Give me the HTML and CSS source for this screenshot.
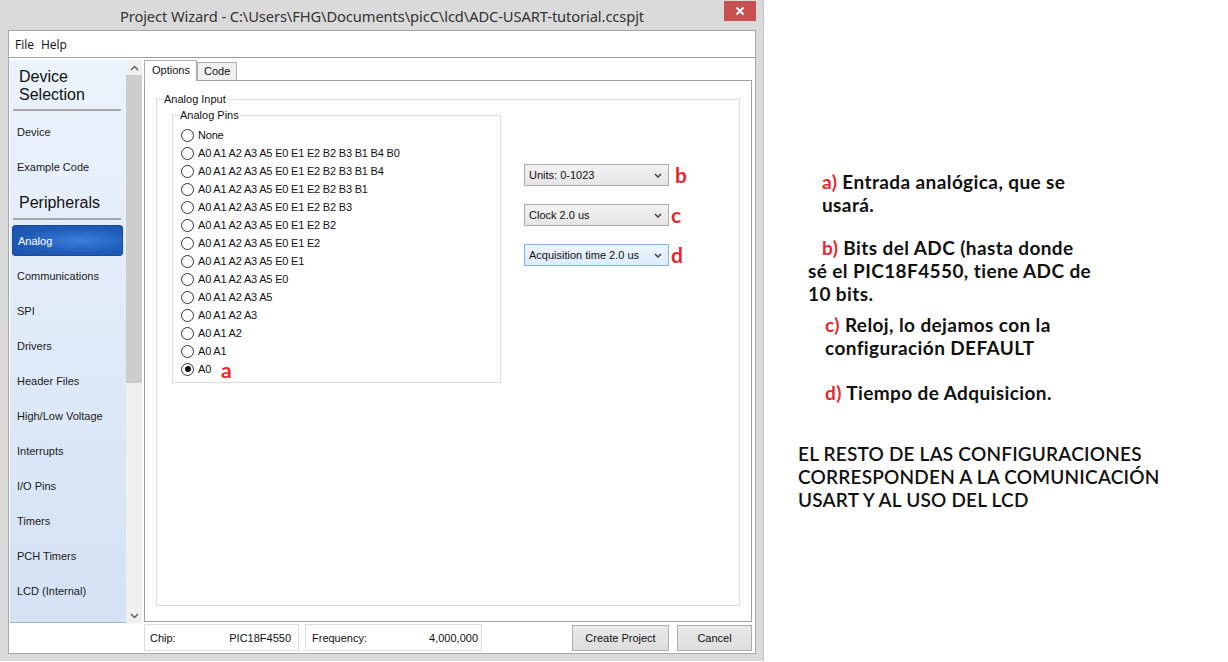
FILE: index.html
```html
<!DOCTYPE html>
<html>
<head>
<meta charset="utf-8">
<title>Project Wizard</title>
<link rel="stylesheet" href="styles.css">
</head>
<body>
<div class="page">
  <div class="window">
    <div class="titlebar">
      <span class="title">Project Wizard - C:\Users\FHG\Documents\picC\lcd\ADC-USART-tutorial.ccspjt</span>
      <div class="close"><svg width="10" height="10" viewBox="0 0 10 10"><path d="M1.5 1.5 L8.5 8.5 M8.5 1.5 L1.5 8.5" stroke="#fff" stroke-width="1.8" fill="none"/></svg></div>
    </div>
    <div class="client">
      <div class="menubar"><span>File</span><span>Help</span></div>
      <div class="main">
        <div class="sidebar">
          <div class="nav">
            <div class="nav-head first">Device<br>Selection</div>
            <div class="sep"></div>
            <div class="nav-item">Device</div>
            <div class="nav-item">Example Code</div>
            <div class="nav-head">Peripherals</div>
            <div class="sep"></div>
            <div class="nav-item active">Analog</div>
            <div class="nav-item">Communications</div>
            <div class="nav-item">SPI</div>
            <div class="nav-item">Drivers</div>
            <div class="nav-item">Header Files</div>
            <div class="nav-item">High/Low Voltage</div>
            <div class="nav-item">Interrupts</div>
            <div class="nav-item">I/O Pins</div>
            <div class="nav-item">Timers</div>
            <div class="nav-item">PCH Timers</div>
            <div class="nav-item">LCD (Internal)</div>
            <div class="nav-item">LCD (External)</div>
          </div>
          <div class="scrollbar">
            <div class="sb-btn"><svg width="9" height="6" viewBox="0 0 9 6"><path d="M1 5 L4.5 1.5 L8 5" stroke="#606060" stroke-width="1.5" fill="none"/></svg></div>
            <div class="sb-track"><div class="sb-thumb"></div></div>
            <div class="sb-btn"><svg width="9" height="6" viewBox="0 0 9 6"><path d="M1 1 L4.5 4.5 L8 1" stroke="#606060" stroke-width="1.5" fill="none"/></svg></div>
          </div>
        </div>
        <div class="rightcol">
          <div class="tabs">
            <div class="tab active">Options</div>
            <div class="tab">Code</div>
          </div>
          <div class="tabpanel">
            <fieldset class="group outer">
              <legend>Analog Input</legend>
              <div class="outer-row">
                <fieldset class="group pins">
                  <legend>Analog Pins</legend>
                  <div class="radios">
                    <div class="radio"><span class="circle"></span>None</div>
                    <div class="radio"><span class="circle"></span>A0 A1 A2 A3 A5 E0 E1 E2 B2 B3 B1 B4 B0</div>
                    <div class="radio"><span class="circle"></span>A0 A1 A2 A3 A5 E0 E1 E2 B2 B3 B1 B4</div>
                    <div class="radio"><span class="circle"></span>A0 A1 A2 A3 A5 E0 E1 E2 B2 B3 B1</div>
                    <div class="radio"><span class="circle"></span>A0 A1 A2 A3 A5 E0 E1 E2 B2 B3</div>
                    <div class="radio"><span class="circle"></span>A0 A1 A2 A3 A5 E0 E1 E2 B2</div>
                    <div class="radio"><span class="circle"></span>A0 A1 A2 A3 A5 E0 E1 E2</div>
                    <div class="radio"><span class="circle"></span>A0 A1 A2 A3 A5 E0 E1</div>
                    <div class="radio"><span class="circle"></span>A0 A1 A2 A3 A5 E0</div>
                    <div class="radio"><span class="circle"></span>A0 A1 A2 A3 A5</div>
                    <div class="radio"><span class="circle"></span>A0 A1 A2 A3</div>
                    <div class="radio"><span class="circle"></span>A0 A1 A2</div>
                    <div class="radio"><span class="circle"></span>A0 A1</div>
                    <div class="radio"><span class="circle checked"></span>A0<span class="mark mark-a">a</span></div>
                  </div>
                </fieldset>
                <div class="selects">
                  <div class="sel-row"><div class="select"><span>Units: 0-1023</span><svg width="8" height="5" viewBox="0 0 8 5"><path d="M1 1 L4 4 L7 1" stroke="#404040" stroke-width="1.5" fill="none"/></svg></div><span class="mark mark-b">b</span></div>
                  <div class="sel-row"><div class="select"><span>Clock 2.0 us</span><svg width="8" height="5" viewBox="0 0 8 5"><path d="M1 1 L4 4 L7 1" stroke="#404040" stroke-width="1.5" fill="none"/></svg></div><span class="mark mark-c">c</span></div>
                  <div class="sel-row"><div class="select focus"><span>Acquisition time 2.0 us</span><svg width="8" height="5" viewBox="0 0 8 5"><path d="M1 1 L4 4 L7 1" stroke="#404040" stroke-width="1.5" fill="none"/></svg></div><span class="mark mark-d">d</span></div>
                </div>
              </div>
            </fieldset>
          </div>
          <div class="statusbar">
            <div class="field chip"><span>Chip:</span><span>PIC18F4550</span></div>
            <div class="field freq"><span>Frequency:</span><span>4,000,000</span></div>
            <div class="spacer"></div>
            <div class="btn create">Create Project</div>
            <div class="btn cancel">Cancel</div>
          </div>
        </div>
      </div>
    </div>
  </div>
  <div class="notes">
    <div class="note note-a">
      <div class="line"><span class="red">a)</span> Entrada analógica, que se</div>
      <div class="line">usará.</div>
    </div>
    <div class="note note-b">
      <div class="line"><span class="red">b)</span> Bits del ADC (hasta donde</div>
      <div class="line out">sé el PIC18F4550, tiene ADC de</div>
      <div class="line out">10 bits.</div>
    </div>
    <div class="note note-c">
      <div class="line"><span class="red">c)</span> Reloj, lo dejamos con la</div>
      <div class="line">configuración DEFAULT</div>
    </div>
    <div class="note note-d">
      <div class="line"><span class="red">d)</span> Tiempo de Adquisicion.</div>
    </div>
    <div class="note caps">
      <div class="line">EL RESTO DE LAS CONFIGURACIONES</div>
      <div class="line">CORRESPONDEN A LA COMUNICACIÓN</div>
      <div class="line">USART Y AL USO DEL LCD</div>
    </div>
  </div>
</div>
</body>
</html>
```

FILE: styles.css
```css
* { box-sizing: border-box; }
html, body { margin: 0; padding: 0; background: #fff; }
body { width: 1228px; height: 662px; overflow: hidden; font-family: "Liberation Sans", Arial, sans-serif; }

.page { display: flex; align-items: flex-start; }

/* window frame */
.window {
  width: 764px; height: 661px; flex: none;
  background: #dadada;
  padding: 0 7px 0 8px;
  border-right: 1px solid #c4c4c4;
}
.titlebar {
  height: 30px; position: relative;
  display: flex; align-items: center; justify-content: center;
}
.title {
  font-family: "Noto Sans", "Open Sans", sans-serif;
  font-size: 14.7px; color: #333; letter-spacing: -0.1px;
  margin-top: 1px;
}
.close {
  position: absolute; top: 1px; right: 0;
  width: 32px; height: 20px; background: #c75050;
  display: flex; align-items: center; justify-content: center;
}

.client {
  height: 624px; background: #fff;
  border: 1px solid #a8a8a8;
  display: flex; flex-direction: column;
}
.menubar {
  height: 27px; border-bottom: 1px solid #a0a0a0;
  display: flex; align-items: center; gap: 7px;
  padding-left: 6px;
  font-family: "Open Sans", "Noto Sans", sans-serif; font-size: 12px; color: #111;
}
.main { flex: 1; display: flex; padding: 2px 3px 0 1px; gap: 2px; }

/* sidebar */
.sidebar { display: flex; height: 563px; flex: none; }
.nav {
  width: 116px; height: 563px; overflow: hidden;
  display: flex; flex-direction: column;
  background: linear-gradient(#ebf3fc, #d4e2f4);
  border-bottom: 1px solid #9fb3cf;
  font-size: 11px; color: #1a1a1a;
}
.nav > * { flex-shrink: 0; }
.nav-head {
  font-size: 16px; line-height: 38px; height: 34px; padding-left: 9px; color: #111;
}
.nav-head.first { line-height: 18px; height: 49px; padding-top: 8px; }
.sep { height: 2px; background: #a9a9a9; margin: 0 5px 3px 3px; }
.nav-item { height: 35px; line-height: 35px; padding-top: 1px; padding-left: 7px; white-space: nowrap; }
.nav-item.active {
  height: 31px; line-height: 29px; margin: 2px 3px 2px 2px; padding: 1px 0 0 5px;
  border-radius: 3px; color: #fff;
  background: radial-gradient(ellipse at 60% 50%, #3b7fdb 0%, #1f5cb8 60%, #1a52a8 100%);
  border: 1px solid #1a4a9a;
}
.scrollbar { width: 16px; display: flex; flex-direction: column; background: #f0f0f0; }
.sb-btn { height: 15px; display: flex; align-items: center; justify-content: center; }
.sb-track { flex: 1; }
.sb-thumb { height: 308px; background: #cdcdcd; }

/* right column */
.rightcol { width: 609px; display: flex; flex-direction: column; }
.tabs { height: 20px; display: flex; align-items: flex-end; position: relative; z-index: 1; }
.tab {
  font-size: 11px; color: #111;
  border: 1px solid #adadad; border-bottom: none;
  background: #f0f0f0; height: 18px; line-height: 17px;
  padding: 0 6px;
}
.tab.active { background: #fff; height: 21px; margin-bottom: -1px; line-height: 19px; padding: 0 7px; width: 53px; }
.tabpanel {
  height: 542px; border: 1px solid #a0a0a0; background: #fff;
  padding: 12px 11px 15px;
}

.group { border: 1px solid #dcdcdc; margin: 0; padding: 0; min-width: 0; }
.group legend {
  font-size: 11px; line-height: 13px; color: #111;
  padding: 0 1px; margin-left: 6px;
}
.outer { height: 513px; }
.outer-row { display: flex; padding: 3px 0 0 15px; gap: 23px; }
.pins { width: 329px; flex: none; }
.radios { padding: 4px 0 4px 8px; }
.radio {
  height: 18px; display: flex; align-items: center;
  font-size: 11px; color: #111; letter-spacing: -0.2px; white-space: nowrap;
}
.circle {
  width: 13px; height: 13px; border: 1px solid #333; border-radius: 50%;
  margin-right: 4px; flex: none; position: relative; background: #fff;
}
.circle.checked::after {
  content: ""; position: absolute; left: 2.5px; top: 2.5px;
  width: 6px; height: 6px; border-radius: 50%; background: #111;
}
.mark { color: #e8262e; font-family: "Lato", sans-serif; font-weight: 700; font-size: 21px; line-height: 18px; letter-spacing: 0; }
.mark-a { margin-left: 10px; margin-top: 1px; }
.mark-b { margin-left: 6px; }
.mark-c { margin-left: 2px; }
.mark-d { margin-left: 2px; }

.selects { padding-top: 55px; display: flex; flex-direction: column; gap: 18px; }
.sel-row { display: flex; align-items: center; height: 22px; }
.select {
  width: 145px; height: 22px; border: 1px solid #acacac;
  background: linear-gradient(#f2f2f2, #e5e5e5);
  display: flex; align-items: center; justify-content: space-between;
  padding: 0 6px 0 4px; font-size: 11px; color: #111;
}
.select.focus { border-color: #7eb4ea; background: linear-gradient(#edf5fd, #dcecfc); }

/* status bar */
.statusbar { height: 27px; margin-top: 2px; display: flex; align-items: stretch; font-size: 11px; color: #111; }
.field {
  border: 1px solid #dcdcdc; display: flex; align-items: center; justify-content: space-between;
  padding: 0 7px 0 5px; height: 27px;
}
.chip { width: 155px; }
.freq { width: 177px; margin-left: 6px; padding-left: 6px; padding-right: 3px; }
.spacer { flex: 1; }
.btn {
  height: 26px; margin-top: 1px;
  border: 1px solid #adadad; background: linear-gradient(#eaeaea, #dedede);
  display: flex; align-items: center; justify-content: center;
}
.create { width: 97px; margin-right: 8px; }
.cancel { width: 75px; }

/* notes */
.notes {
  padding-top: 170px; padding-left: 34px;
  font-family: "Lato", sans-serif; font-size: 19px; color: #111;
}
.note .line { line-height: 23px; white-space: nowrap; padding-left: 24px; font-weight: 700; letter-spacing: 0.4px; }
.note .line.out { padding-left: 10px; }
.red { color: #e8262e; }
.note-b { margin-top: 20px; }
.note-c { margin-top: 8px; }
.note-c .line, .note-d .line { padding-left: 27px; }
.note-d { margin-top: 22px; }
.caps { margin-top: 38px; }
.caps .line { padding-left: 0; font-weight: 600; letter-spacing: 0.2px; }
```
